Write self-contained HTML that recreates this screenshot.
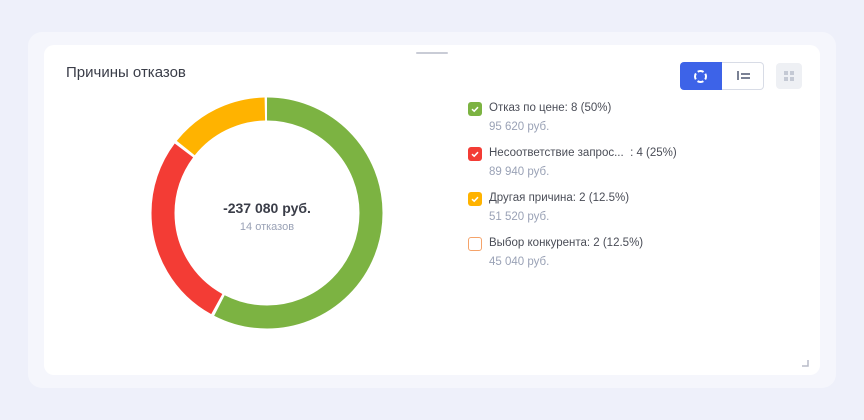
<!DOCTYPE html>
<html><head><meta charset="utf-8"><style>
body{margin:0;width:864px;height:420px;background:#eef0fa;font-family:"Liberation Sans",sans-serif;position:relative;overflow:hidden}
.outer{position:absolute;left:28px;top:32px;width:808px;height:356px;background:#f5f6fc;border-radius:14px}
.card{position:absolute;left:44px;top:45px;width:776px;height:330px;background:#fff;border-radius:10px}
.handle{position:absolute;left:416px;top:52px;width:32px;height:2px;background:#c9ccd6;border-radius:1px}
.title{position:absolute;left:66px;top:64px;font-size:15px;color:#3a3d48}
.seg{position:absolute;top:62px;height:28px;box-sizing:border-box}
.leg{position:absolute;left:468px;font-size:11.5px;color:#4a4d57}
.leg .box{position:absolute;left:0;top:1px;width:14px;height:14px;border-radius:3px;box-sizing:border-box}
.leg .t{position:absolute;left:21px;top:1px;white-space:nowrap}
.leg .s{position:absolute;left:21px;top:20px;color:#9aa2b6;white-space:nowrap}
</style></head><body>
<div class="outer"></div>
<div class="card"></div>
<div class="handle"></div>
<div class="title">Причины отказов</div>
<div class="seg" style="left:680px;width:42px;background:#3d63e8;border-radius:4px 0 0 4px"></div>
<div class="seg" style="left:722px;width:42px;border:1px solid #d8dce6;border-left:none;border-radius:0 4px 4px 0"></div>
<svg style="position:absolute;left:693px;top:69px" width="15" height="15" viewBox="0 0 15 15"><circle cx="7.5" cy="7.5" r="5.5" fill="none" stroke="#fff" stroke-width="2" stroke-dasharray="6.2 2.44" stroke-dashoffset="3.1"/></svg>
<div style="position:absolute;left:737px;top:71px;width:2px;height:9px;background:#7a8194"></div>
<div style="position:absolute;left:741px;top:73px;width:9px;height:1.5px;background:#7a8194"></div>
<div style="position:absolute;left:741px;top:77px;width:9px;height:1.5px;background:#7a8194"></div>
<div style="position:absolute;left:776px;top:63px;width:26px;height:26px;background:#eef0f4;border-radius:4px"></div>
<svg style="position:absolute;left:784px;top:71px" width="10" height="10"><rect x="0" y="0" width="4" height="4" fill="#c4c9d4"/><rect x="6" y="0" width="4" height="4" fill="#c4c9d4"/><rect x="0" y="6" width="4" height="4" fill="#c4c9d4"/><rect x="6" y="6" width="4" height="4" fill="#c4c9d4"/></svg>
<svg style="position:absolute;left:0;top:0" width="864" height="420">
<g transform="rotate(-90 267 213)" fill="none" stroke-width="23">
<circle cx="267" cy="213" r="104" stroke="#7cb342" stroke-dasharray="376 700"/>
<circle cx="267" cy="213" r="104" stroke="#f33c35" stroke-dasharray="178 700" stroke-dashoffset="-379"/>
<circle cx="267" cy="213" r="104" stroke="#ffb300" stroke-dasharray="91 700" stroke-dashoffset="-560"/>
</g>
<path d="M802 366h6v-6" fill="none" stroke="#b8bcc8" stroke-width="1.5"/>
</svg>
<div style="position:absolute;left:167px;top:200px;width:200px;text-align:center;font-size:14px;font-weight:bold;color:#3a3d48">-237 080 руб.</div>
<div style="position:absolute;left:167px;top:221px;width:200px;text-align:center;font-size:11px;color:#9aa2b6">14 отказов</div>
<div class="leg" style="top:101px"><div class="box" style="background:#7cb342"><svg width="14" height="14"><path d="M4 7.2l2.2 2L10 5.2" fill="none" stroke="#fff" stroke-width="1.5"/></svg></div><div class="t">Отказ по цене: 8 (50%)</div><div class="s">95 620 руб.</div></div>
<div class="leg" style="top:146px"><div class="box" style="background:#f33c35"><svg width="14" height="14"><path d="M4 7.2l2.2 2L10 5.2" fill="none" stroke="#fff" stroke-width="1.5"/></svg></div><div class="t">Несоответствие запрос...&nbsp; : 4 (25%)</div><div class="s">89 940 руб.</div></div>
<div class="leg" style="top:191px"><div class="box" style="background:#ffb300"><svg width="14" height="14"><path d="M4 7.2l2.2 2L10 5.2" fill="none" stroke="#fff" stroke-width="1.5"/></svg></div><div class="t">Другая причина: 2 (12.5%)</div><div class="s">51 520 руб.</div></div>
<div class="leg" style="top:236px"><div class="box" style="border:1.5px solid #f5a36a"></div><div class="t">Выбор конкурента: 2 (12.5%)</div><div class="s">45 040 руб.</div></div>
</body></html>
